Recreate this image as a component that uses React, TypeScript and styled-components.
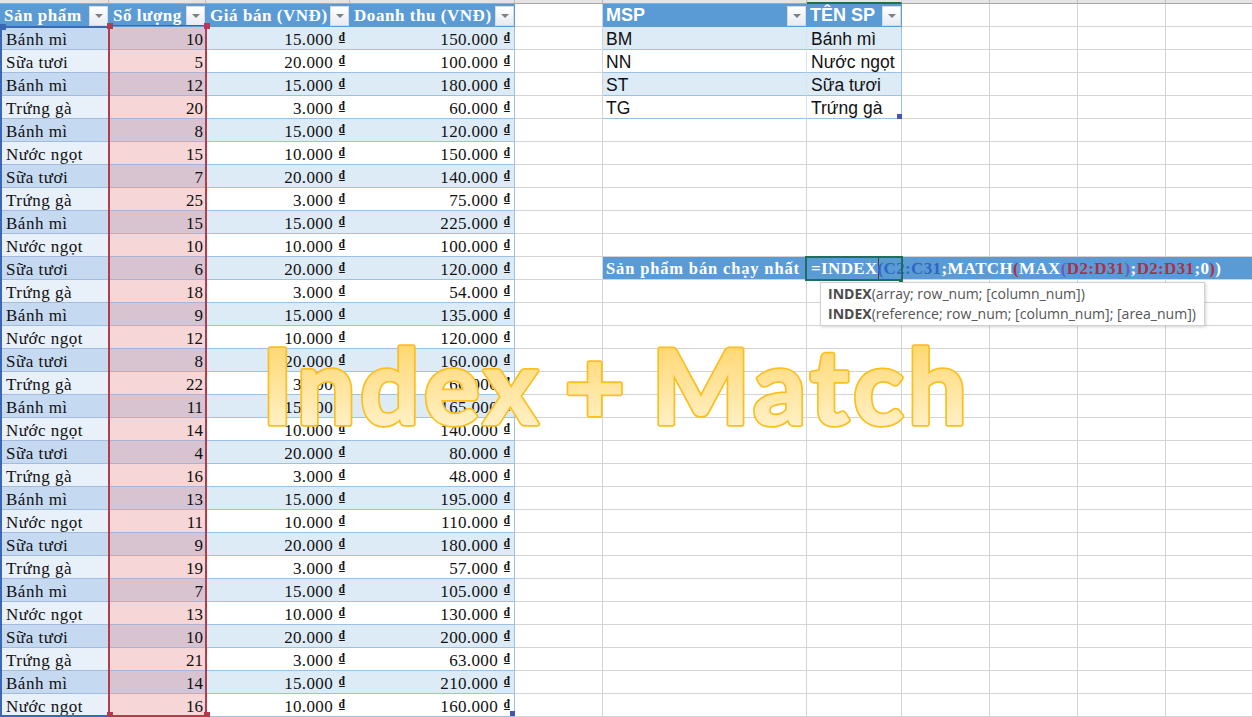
import React from "react";
import styled, { createGlobalStyle } from "styled-components";

const Global = createGlobalStyle`
  html, body { margin: 0; padding: 0; background: #fff; overflow: hidden; }
  #root { width: 1252px; height: 717px; overflow: hidden; }
`;

const GRID = "#d4d4d4";
const TABLE_LINE = "#9bc2e6";
const HEAD = "#5b9bd5";
const BAND = "#ddebf7";
const SERIF = `"Liberation Serif", "Times New Roman", serif`;
const SANS = `"Liberation Sans", Arial, sans-serif`;

const Sheet = styled.div`
  position: relative;
  width: 1252px;
  height: 717px;
  overflow: hidden;
  display: grid;
  grid-template-columns: 109px 97px 144px 165px 88px 204px 95px 88px 88px 88px 88px;
  grid-template-rows: 4px repeat(31, 23px);
  background: #fff;
`;

const StripCell = styled.div<{ $active?: boolean }>`
  box-sizing: border-box;
  background: #e4e4e4;
  border-right: 1px solid #bdbdbd;
  border-bottom: 1px solid #a8a8a8;
  ${(p) => (p.$active ? "border-top: 1px solid #e4e4e4; border-bottom: 2px solid #217346;" : "")}
`;

const GridCell = styled.div`
  box-sizing: border-box;
  border-right: 1px solid ${GRID};
  border-bottom: 1px solid ${GRID};
`;

const HeaderCell = styled.div<{ $serif?: boolean }>`
  box-sizing: border-box;
  display: flex;
  align-items: center;
  justify-content: space-between;
  background: ${HEAD};
  color: #fff;
  font-family: ${(p) => (p.$serif ? SERIF : SANS)};
  font-weight: 700;
  font-size: ${(p) => (p.$serif ? "17px" : "18px")};
  letter-spacing: ${(p) => (p.$serif ? "0.55px" : "0")};
  padding: 0 1px 0 ${(p) => (p.$serif ? "4px" : "3px")};
  white-space: nowrap;
  overflow: hidden;
`;

const FilterButton = styled.span`
  flex: none;
  box-sizing: border-box;
  width: 19px;
  height: 20px;
  display: flex;
  align-items: center;
  justify-content: center;
  background: linear-gradient(#ffffff, #e6ecf2);
  border: 1px solid #d3dbe3;
  &::after {
    content: "";
    border-left: 4px solid transparent;
    border-right: 4px solid transparent;
    border-top: 4px solid #7f7f7f;
  }
`;

const DataCell = styled.div<{ $bg: string; $line?: string; $right?: boolean }>`
  box-sizing: border-box;
  background: ${(p) => p.$bg};
  border-bottom: 1px solid ${(p) => p.$line ?? TABLE_LINE};
  font-family: ${SERIF};
  font-size: 17px;
  line-height: 25px;
  color: #111;
  letter-spacing: ${(p) => (p.$right ? "0" : "0.5px")};
  padding: 0 ${(p) => (p.$right ? "3px" : "0")} 0 ${(p) => (p.$right ? "0" : "6px")};
  text-align: ${(p) => (p.$right ? "right" : "left")};
  white-space: nowrap;
  overflow: hidden;
`;

const MoneyCell = styled(DataCell)`
  display: flex;
  justify-content: flex-end;
  letter-spacing: 0.35px;
  padding-right: 5px;
`;

const EndMoneyCell = styled(MoneyCell)`
  border-right: 1px solid ${TABLE_LINE};
  padding-right: 4px;
`;

const Dong = styled.span`
  font-size: 11.5px;
  font-weight: 700;
  line-height: 21px;
  margin-left: 4px;
  width: 8px;
  text-decoration: underline;
  letter-spacing: 0;
`;

const LookupCell = styled.div<{ $band: boolean; $end?: boolean }>`
  box-sizing: border-box;
  background: ${(p) => (p.$band ? BAND : "#fff")};
  border-bottom: 1px solid ${TABLE_LINE};
  border-right: 1px solid ${(p) => (p.$end ? TABLE_LINE : "#d8e4ef")};
  font-family: ${SANS};
  font-size: 17.5px;
  line-height: 25px;
  color: #111;
  padding-left: ${(p) => (p.$end ? "4px" : "3px")};
  white-space: nowrap;
  overflow: hidden;
`;

const BannerLabel = styled.div`
  box-sizing: border-box;
  background: ${HEAD};
  border-bottom: 1px solid ${GRID};
  color: #fff;
  font-family: ${SERIF};
  font-weight: 700;
  font-size: 16.5px;
  letter-spacing: 0.85px;
  line-height: 23px;
  padding-left: 3px;
  white-space: nowrap;
`;

const FormulaCell = styled.div`
  grid-column: 7 / -1;
  box-sizing: border-box;
  background: ${HEAD};
  border-bottom: 1px solid ${GRID};
  color: #fff;
  font-family: ${SERIF};
  font-weight: 700;
  font-size: 17px;
  letter-spacing: 0.35px;
  line-height: 23px;
  padding-left: 4px;
  white-space: nowrap;
`;

const Ref = styled.span<{ $c: string }>`
  color: ${(p) => p.$c};
`;

const Caret = styled.span`
  display: inline-block;
  width: 1px;
  height: 22px;
  margin-right: -1px;
  vertical-align: -5px;
  background: #444;
`;

const Selection = styled.div<{ $c: string; $l: number; $t: number; $w: number; $h: number; $noRight?: boolean }>`
  position: absolute;
  box-sizing: border-box;
  left: ${(p) => p.$l}px;
  top: ${(p) => p.$t}px;
  width: ${(p) => p.$w}px;
  height: ${(p) => p.$h}px;
  border: 2px solid ${(p) => p.$c};
  ${(p) => (p.$noRight ? "border-right: 0;" : "")}
  pointer-events: none;
`;

const RedSelection = styled(Selection)`
  border-top-width: 1px;
`;

const Handle = styled.span<{ $c: string; $x: number; $y: number; $s?: number }>`
  position: absolute;
  box-sizing: border-box;
  left: ${(p) => p.$x}px;
  top: ${(p) => p.$y}px;
  width: ${(p) => p.$s ?? 6}px;
  height: ${(p) => p.$s ?? 6}px;
  background: ${(p) => p.$c};
`;

const ActiveCell = styled.div`
  position: absolute;
  box-sizing: border-box;
  left: 805px;
  top: 256px;
  width: 98px;
  height: 25px;
  border: 2px solid #1f6f5c;
`;

const Tooltip = styled.div`
  position: absolute;
  box-sizing: border-box;
  left: 820px;
  top: 282px;
  width: 385px;
  height: 44px;
  padding: 1px 0 0 7px;
  background: #fff;
  border: 1px solid #d0d0d0;
  box-shadow: 1px 1px 3px rgba(0, 0, 0, 0.18);
  font-family: "Open Sans", sans-serif;
  font-size: 14.05px;
  line-height: 20px;
  color: #555;
  white-space: nowrap;
`;

const TooltipName = styled.b`
  font-weight: 700;
  color: #4a4a4a;
`;

const WordArt = styled.svg`
  position: absolute;
  left: 250px;
  top: 330px;
  width: 740px;
  height: 110px;
  font-family: Lato, "Open Sans", sans-serif;
  font-weight: 700;
  font-size: 104px;
  letter-spacing: 4.75px;
  word-spacing: -8px;
`;

const sales: [string, number, string, string][] = [
  ["Bánh mì", 10, "15.000", "150.000"],
  ["Sữa tươi", 5, "20.000", "100.000"],
  ["Bánh mì", 12, "15.000", "180.000"],
  ["Trứng gà", 20, "3.000", "60.000"],
  ["Bánh mì", 8, "15.000", "120.000"],
  ["Nước ngọt", 15, "10.000", "150.000"],
  ["Sữa tươi", 7, "20.000", "140.000"],
  ["Trứng gà", 25, "3.000", "75.000"],
  ["Bánh mì", 15, "15.000", "225.000"],
  ["Nước ngọt", 10, "10.000", "100.000"],
  ["Sữa tươi", 6, "20.000", "120.000"],
  ["Trứng gà", 18, "3.000", "54.000"],
  ["Bánh mì", 9, "15.000", "135.000"],
  ["Nước ngọt", 12, "10.000", "120.000"],
  ["Sữa tươi", 8, "20.000", "160.000"],
  ["Trứng gà", 22, "3.000", "66.000"],
  ["Bánh mì", 11, "15.000", "165.000"],
  ["Nước ngọt", 14, "10.000", "140.000"],
  ["Sữa tươi", 4, "20.000", "80.000"],
  ["Trứng gà", 16, "3.000", "48.000"],
  ["Bánh mì", 13, "15.000", "195.000"],
  ["Nước ngọt", 11, "10.000", "110.000"],
  ["Sữa tươi", 9, "20.000", "180.000"],
  ["Trứng gà", 19, "3.000", "57.000"],
  ["Bánh mì", 7, "15.000", "105.000"],
  ["Nước ngọt", 13, "10.000", "130.000"],
  ["Sữa tươi", 10, "20.000", "200.000"],
  ["Trứng gà", 21, "3.000", "63.000"],
  ["Bánh mì", 14, "15.000", "210.000"],
  ["Nước ngọt", 16, "10.000", "160.000"],
];

const lookup: [string, string][] = [
  ["BM", "Bánh mì"],
  ["NN", "Nước ngọt"],
  ["ST", "Sữa tươi"],
  ["TG", "Trứng gà"],
];

const BLUE = "#2f66c4";
const RED = "#b02f48";
const PURPLE = "#7058b8";

const Head = ({ label, serif }: { label: string; serif?: boolean }) => (
  <HeaderCell $serif={serif}>
    {label}
    <FilterButton />
  </HeaderCell>
);

const Gap = ({ n }: { n: number }) => (
  <>
    {Array.from({ length: n }, (_, i) => (
      <GridCell key={i} />
    ))}
  </>
);

const rightSide = (row: number) => {
  if (row < lookup.length) {
    const [code, name] = lookup[row];
    return (
      <>
        <GridCell />
        <LookupCell $band={row % 2 === 0}>{code}</LookupCell>
        <LookupCell $band={row % 2 === 0} $end>
          {name}
        </LookupCell>
        <Gap n={4} />
      </>
    );
  }
  if (row === 10) {
    return (
      <>
        <GridCell />
        <BannerLabel>Sản phẩm bán chạy nhất</BannerLabel>
        <FormulaCell>
          =INDEX
          <Caret />
          <Ref $c={BLUE}>(C2:C31</Ref>;MATCH<Ref $c={RED}>(</Ref>MAX<Ref $c={PURPLE}>(</Ref>
          <Ref $c={RED}>D2:D31</Ref>
          <Ref $c={PURPLE}>)</Ref>;<Ref $c={RED}>D2:D31</Ref>;0<Ref $c={RED}>)</Ref>)
        </FormulaCell>
      </>
    );
  }
  return <Gap n={7} />;
};

export default function App() {
  return (
    <>
      <Global />
      <Sheet>
        {Array.from({ length: 11 }, (_, i) => (
          <StripCell key={i} $active={i === 6} />
        ))}

        <Head label="Sản phẩm" serif />
        <Head label="Số lượng" serif />
        <Head label="Giá bán (VNĐ)" serif />
        <Head label="Doanh thu (VNĐ)" serif />
        <GridCell />
        <Head label="MSP" />
        <Head label="TÊN SP" />
        <Gap n={4} />

        {sales.map(([name, qty, price, revenue], row) => {
          const band = row % 2 === 0;
          return (
            <React.Fragment key={row}>
              <DataCell $bg={band ? "#c5d9f1" : "#e8f0fa"} $line="#a3bbdd">
                {name}
              </DataCell>
              <DataCell $bg={band ? "#d8c4d0" : "#f6d6d6"} $line="#a9b3d6" $right>
                {qty}
              </DataCell>
              <MoneyCell $bg={band ? BAND : "#fff"} $right>
                {price}
                <Dong>₫</Dong>
              </MoneyCell>
              <EndMoneyCell $bg={band ? BAND : "#fff"} $right>
                {revenue}
                <Dong>₫</Dong>
              </EndMoneyCell>
              {rightSide(row)}
            </React.Fragment>
          );
        })}

        <Selection $c="#3a68b4" $l={0} $t={26} $w={108} $h={691} $noRight />
        <Handle $c="#3a68b4" $x={0} $y={24} />
        <RedSelection $c="#b23c4b" $l={108} $t={25} $w={99} $h={692} />
        <Handle $c="#b23c4b" $x={107} $y={23} />
        <Handle $c="#b23c4b" $x={204} $y={23} />
        <Handle $c="#b23c4b" $x={107} $y={712} />
        <Handle $c="#b23c4b" $x={204} $y={712} />
        <Handle $c="#4455b4" $x={510} $y={711} $s={5} />
        <Handle $c="#4455b4" $x={897} $y={114} $s={5} />

        <ActiveCell />
        <Handle $c="#1f6f5c" $x={899} $y={279} $s={4} />

        <Tooltip>
          <div>
            <TooltipName>INDEX</TooltipName>(array; row_num; [column_num])
          </div>
          <div>
            <TooltipName>INDEX</TooltipName>(reference; row_num; [column_num]; [area_num])
          </div>
        </Tooltip>

        <WordArt viewBox="0 0 740 110">
          <defs>
            <linearGradient id="wordFill" gradientUnits="userSpaceOnUse" x1="0" y1="15" x2="0" y2="97">
              <stop offset="0" stopColor="#ffd873" />
              <stop offset="1" stopColor="#fff0c6" />
            </linearGradient>
          </defs>
          <text x="12" y="94" fill="none" stroke="#fcbf20" strokeWidth="5.5" strokeLinejoin="round">
            Index + Match
          </text>
          <text x="12" y="94" fill="url(#wordFill)" stroke="url(#wordFill)" strokeWidth="2" strokeLinejoin="round">
            Index + Match
          </text>
        </WordArt>
      </Sheet>
    </>
  );
}
